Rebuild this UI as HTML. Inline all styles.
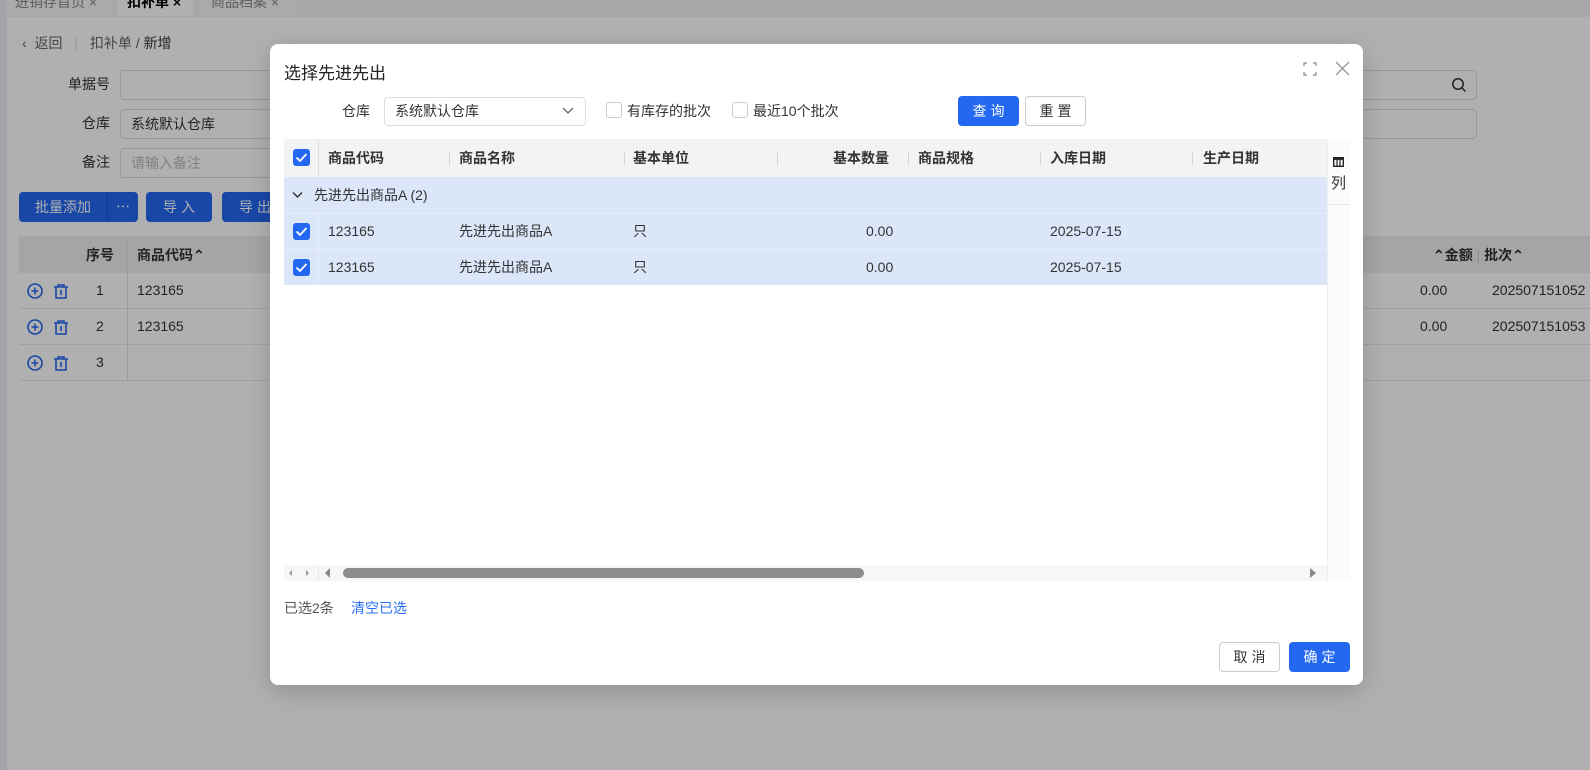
<!DOCTYPE html>
<html><head><meta charset="utf-8"><style>
*{box-sizing:border-box;margin:0;padding:0}
body{width:1590px;height:770px;overflow:hidden;position:relative;background:#fff;font-family:"Liberation Sans","Noto Sans CJK SC",sans-serif;font-size:14px;color:#333}
.a{position:absolute}
.lbl{position:absolute;text-align:right;width:80px;color:#333}
.inp{position:absolute;border:1px solid #ddd;border-radius:4px;background:#fff;height:30px;padding:0 10px;line-height:28px}
.btn{position:absolute;background:#2468f2;color:#fff;border-radius:4px;height:30px;line-height:30px;text-align:center;letter-spacing:4px}
.ov{position:absolute;left:0;top:0;width:1590px;height:770px;background:rgba(0,0,0,0.31)}
.modal{position:absolute;left:270px;top:44px;width:1093px;height:641px;background:#fff;border-radius:8px;box-shadow:0 6px 24px rgba(0,0,0,.18)}
.cb{position:absolute;width:17px;height:17px;border-radius:3px;background:#2468f2}
.cb svg{position:absolute;left:2px;top:3px}
.ecb{position:absolute;width:16px;height:16px;border:1px solid #ccc;border-radius:3px;background:#fff}
.th{position:absolute;top:0;height:38px;line-height:38px;font-weight:bold;color:#333}
.dv{position:absolute;top:12px;width:1px;height:14px;background:#d5d5d5}
.td{position:absolute;line-height:36px}
</style></head><body>
<div class="a" style="left:0;top:0;width:1590px;height:17px;background:#f3f3f3"></div>
<div class="a" style="left:0;top:0;width:7px;height:770px;background:#eef0f3"></div>
<div class="a" style="left:7px;top:-6px;width:105px;height:22px;background:#f7f7f7;color:#888;padding-left:8px;font-size:14px;line-height:16px">进销存首页 ×</div>
<div class="a" style="left:117px;top:-6px;width:76px;height:22px;background:#fff;color:#000;font-weight:bold;padding-left:10px;line-height:16px">扣补单 ×</div>
<div class="a" style="left:201px;top:-6px;width:92px;height:22px;background:#f7f7f7;color:#888;padding-left:10px;line-height:16px">商品档案 ×</div>
<div class="a" style="left:22px;top:34px;line-height:18px;color:#666">&lsaquo;&nbsp; 返回 <span style="color:#ddd;margin:0 8px">|</span> 扣补单 / <span style="color:#333">新增</span></div>
<div class="lbl" style="left:30px;top:74px">单据号</div>
<div class="inp" style="left:120px;top:70px;width:1357px"></div>
<svg class="a" style="left:1451px;top:77px" width="16" height="16" viewBox="0 0 16 16"><circle cx="7" cy="7" r="5.2" fill="none" stroke="#333" stroke-width="1.5"/><path d="M11 11l3.5 3.5" stroke="#333" stroke-width="1.5"/></svg>
<div class="lbl" style="left:30px;top:113px">仓库</div>
<div class="inp" style="left:120px;top:109px;width:1357px">系统默认仓库</div>
<div class="lbl" style="left:30px;top:152px">备注</div>
<div class="inp" style="left:120px;top:148px;width:400px;color:#bbb">请输入备注</div>
<div class="btn" style="left:19px;top:192px;width:88px;letter-spacing:0;border-radius:4px 0 0 4px">批量添加</div>
<div class="btn" style="left:107px;top:192px;width:31px;border-left:1px solid #1b55c8;letter-spacing:0;border-radius:0 4px 4px 0">⋯</div>
<div class="btn" style="left:146px;top:192px;width:66px;padding-left:4px">导入</div>
<div class="btn" style="left:222px;top:192px;width:66px;padding-left:4px">导出</div>
<div class="a" style="left:19px;top:236px;width:1571px;height:37px;background:#f0f0f0"></div>
<div class="a" style="left:127px;top:236px;width:1px;height:145px;background:#e4e4e4"></div>
<div class="a" style="left:19px;top:308px;width:1571px;height:1px;background:#e8e8e8"></div>
<div class="a" style="left:19px;top:344px;width:1571px;height:1px;background:#e8e8e8"></div>
<div class="a" style="left:19px;top:380px;width:1571px;height:1px;background:#e8e8e8"></div>
<div class="a" style="left:86px;top:245px;font-weight:bold">序号</div>
<div class="a" style="left:137px;top:245px;font-weight:bold">商品代码⌃</div>
<div class="a" style="left:1433px;top:245px;font-weight:bold">⌃金额 <span style="color:#ccc;font-weight:normal">|</span> 批次⌃</div>
<div class="a" style="left:96px;top:282px">1</div><div class="a" style="left:137px;top:282px">123165</div>
<div class="a" style="left:96px;top:318px">2</div><div class="a" style="left:137px;top:318px">123165</div>
<div class="a" style="left:96px;top:354px">3</div>
<div class="a" style="left:1420px;top:282px">0.00</div><div class="a" style="left:1492px;top:282px">202507151052</div>
<div class="a" style="left:1420px;top:318px">0.00</div><div class="a" style="left:1492px;top:318px">202507151053</div>
<svg class="a" style="left:26px;top:282px" width="50" height="90" viewBox="0 0 50 90">
<g fill="none" stroke="#2468f2" stroke-width="1.6">
<g><circle cx="9" cy="9" r="7"/><path d="M5.5 9h7M9 5.5v7"/><path d="M28 5h14M32 5V3h6v2M30 5v11h10V5M35 8v5"/></g>
<g transform="translate(0,36)"><circle cx="9" cy="9" r="7"/><path d="M5.5 9h7M9 5.5v7"/><path d="M28 5h14M32 5V3h6v2M30 5v11h10V5M35 8v5"/></g>
<g transform="translate(0,72)"><circle cx="9" cy="9" r="7"/><path d="M5.5 9h7M9 5.5v7"/><path d="M28 5h14M32 5V3h6v2M30 5v11h10V5M35 8v5"/></g>
</g></svg>
<div class="ov"></div>

<div class="modal">
<div class="a" style="left:14px;top:15px;font-size:17px;color:#222">选择先进先出</div>
<svg class="a" style="left:1033px;top:18px" width="14" height="14" viewBox="0 0 14 14" fill="none" stroke="#888" stroke-width="1.2"><path d="M1 4V1h3M10 1h3v3M13 10v3h-3M4 13H1v-3"/></svg>
<svg class="a" style="left:1065px;top:17px" width="15" height="15" viewBox="0 0 15 15" stroke="#999" stroke-width="1.4"><path d="M1 1l13 13M14 1L1 14"/></svg>

<div class="a" style="left:72px;top:57px;color:#333">仓库</div>
<div class="a" style="left:114px;top:53px;width:202px;height:29px;border:1px solid #ddd;border-radius:4px;padding-left:10px;line-height:27px">系统默认仓库
<svg class="a" style="left:177px;top:9px" width="12" height="8" viewBox="0 0 12 8"><path d="M1 1l5 5 5-5" fill="none" stroke="#666" stroke-width="1.3"/></svg></div>
<div class="ecb" style="left:336px;top:58px"></div>
<div class="a" style="left:357px;top:57px">有库存的批次</div>
<div class="ecb" style="left:462px;top:58px"></div>
<div class="a" style="left:483px;top:57px">最近10个批次</div>
<div class="btn" style="left:688px;top:52px;width:61px;height:30px;line-height:30px;padding-left:4px">查询</div>
<div class="a" style="left:755px;top:52px;width:61px;height:30px;line-height:28px;border:1px solid #ccc;border-radius:4px;text-align:center;letter-spacing:4px;padding-left:4px">重置</div>

<div class="a" style="left:14px;top:95px;width:1066px;height:442px;overflow:hidden">
 <div class="a" style="left:0;top:0;width:1043px;height:38px;background:#f2f3f5"></div>
 <div class="a" style="left:34px;top:0;width:1px;height:38px;background:#e0e0e0"></div>
 <div class="cb" style="left:9px;top:10px"><svg width="13" height="11" viewBox="0 0 13 11"><path d="M1.5 5.5l3.5 3.5 6.5-7" fill="none" stroke="#fff" stroke-width="1.8"/></svg></div>
 <div class="th" style="left:44px">商品代码</div>
 <div class="dv" style="left:165px"></div><div class="th" style="left:175px">商品名称</div>
 <div class="dv" style="left:340px"></div><div class="th" style="left:349px">基本单位</div>
 <div class="dv" style="left:493px"></div><div class="th" style="left:549px">基本数量</div>
 <div class="dv" style="left:624px"></div><div class="th" style="left:634px">商品规格</div>
 <div class="dv" style="left:756px"></div><div class="th" style="left:766px">入库日期</div>
 <div class="dv" style="left:908px"></div><div class="th" style="left:919px">生产日期</div>
 <div class="a" style="left:0;top:38px;width:1043px;height:108px;background:#dce6f9"></div>
 <div class="a" style="left:0;top:74px;width:1043px;height:1px;background:#e8eef9"></div>
 <div class="a" style="left:0;top:110px;width:1043px;height:1px;background:#e8eef9"></div>
 <div class="a" style="left:34px;top:75px;width:1px;height:71px;background:#e8eef9"></div>
 <svg class="a" style="left:8px;top:52px" width="11" height="8" viewBox="0 0 11 8"><path d="M1 1.5l4.5 4.5 4.5-4.5" fill="none" stroke="#333" stroke-width="1.5"/></svg>
 <div class="td" style="left:30px;top:38px">先进先出商品A (2)</div>
 <div class="cb" style="left:9px;top:84px"><svg width="13" height="11" viewBox="0 0 13 11"><path d="M1.5 5.5l3.5 3.5 6.5-7" fill="none" stroke="#fff" stroke-width="1.8"/></svg></div>
 <div class="td" style="left:44px;top:74px">123165</div><div class="td" style="left:175px;top:74px">先进先出商品A</div><div class="td" style="left:349px;top:74px">只</div><div class="td" style="left:582px;top:74px">0.00</div><div class="td" style="left:766px;top:74px">2025-07-15</div>
 <div class="cb" style="left:9px;top:120px"><svg width="13" height="11" viewBox="0 0 13 11"><path d="M1.5 5.5l3.5 3.5 6.5-7" fill="none" stroke="#fff" stroke-width="1.8"/></svg></div>
 <div class="td" style="left:44px;top:110px">123165</div><div class="td" style="left:175px;top:110px">先进先出商品A</div><div class="td" style="left:349px;top:110px">只</div><div class="td" style="left:582px;top:110px">0.00</div><div class="td" style="left:766px;top:110px">2025-07-15</div>
 <div class="a" style="left:1043px;top:0;width:23px;height:442px;background:#fafbfc;border-left:1px solid #eee"></div>
 <div class="a" style="left:1044px;top:65px;width:22px;height:1px;background:#e8e8e8"></div>
 <svg class="a" style="left:1049px;top:18px" width="11" height="10" viewBox="0 0 11 10"><rect x="0.7" y="0.7" width="9.6" height="8.6" fill="none" stroke="#222" stroke-width="1.4"/><rect x="0.7" y="0.7" width="9.6" height="2.2" fill="#222"/><path d="M4 2v7M7 2v7" stroke="#222" stroke-width="1.2"/></svg>
 <div class="a" style="left:1047px;top:33px;font-size:15px">列</div>
 <div class="a" style="left:0;top:426px;width:1043px;height:16px;background:#f7f7f7"></div>
 <div class="a" style="left:34px;top:427px;width:1px;height:14px;background:#e6e6e6"></div>
 <svg class="a" style="left:4px;top:430px" width="30" height="8" viewBox="0 0 30 8"><path d="M4 1v6L1 4zM18 1v6l3-3z" fill="#999"/></svg>
 <svg class="a" style="left:40px;top:429px" width="8" height="10" viewBox="0 0 8 10"><path d="M6 0v10L1 5z" fill="#888"/></svg>
 <div class="a" style="left:59px;top:429px;width:521px;height:10px;border-radius:5px;background:#8c8c8c"></div>
 <svg class="a" style="left:1025px;top:429px" width="8" height="10" viewBox="0 0 8 10"><path d="M1 0v10L7 5z" fill="#888"/></svg>
</div>

<div class="a" style="left:14px;top:554px;color:#555">已选2条</div>
<div class="a" style="left:81px;top:554px;color:#2a6ff5">清空已选</div>
<div class="a" style="left:949px;top:598px;width:61px;height:30px;border:1px solid #ccc;border-radius:4px;text-align:center;line-height:28px;letter-spacing:4px;padding-left:4px">取消</div>
<div class="btn" style="left:1019px;top:598px;width:61px;padding-left:4px">确定</div>
</div>
</body></html>
